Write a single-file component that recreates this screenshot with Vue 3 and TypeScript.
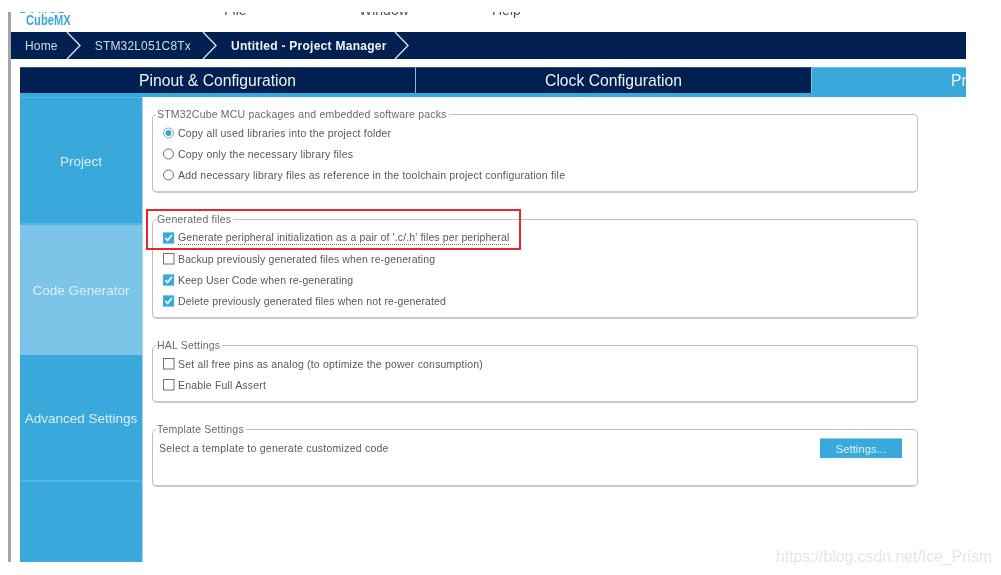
<script setup lang="ts">
interface Opt { label: string; on?: boolean; dotted?: boolean }
interface Group { title: string; kind: 'radio' | 'check'; opts: Opt[]; cls: string }

const crumbs = [
  { label: 'Home', cls: 'c-home' },
  { label: 'STM32L051C8Tx', cls: 'c-mcu' },
  { label: 'Untitled - Project Manager', cls: 'c-cur' },
]
const side = [
  { label: 'Project', cls: 's-project' },
  { label: 'Code Generator', cls: 's-code' },
  { label: 'Advanced Settings', cls: 's-adv' },
]
const groups: Group[] = [
  {
    title: 'STM32Cube MCU packages and embedded software packs', kind: 'radio', cls: 'g1',
    opts: [
      { label: 'Copy all used libraries into the project folder', on: true },
      { label: 'Copy only the necessary library files' },
      { label: 'Add necessary library files as reference in the toolchain project configuration file' },
    ],
  },
  {
    title: 'Generated files', kind: 'check', cls: 'g2',
    opts: [
      { label: "Generate peripheral initialization as a pair of '.c/.h' files per peripheral", on: true, dotted: true },
      { label: 'Backup previously generated files when re-generating' },
      { label: 'Keep User Code when re-generating', on: true },
      { label: 'Delete previously generated files when not re-generated', on: true },
    ],
  },
  {
    title: 'HAL Settings', kind: 'check', cls: 'g3',
    opts: [
      { label: 'Set all free pins as analog (to optimize the power consumption)' },
      { label: 'Enable Full Assert' },
    ],
  },
]
</script>

<template>
  <div class="page">
    <div class="frame">
      <header class="top">
        <div class="logo"><span class="stm">STM32</span><span class="cube">CubeMX</span></div>
        <nav class="menu"><span class="m-file">File</span><span class="m-win">Window</span><span class="m-help">Help</span></nav>
      </header>
      <div class="crumbs">
        <div v-for="c in crumbs" :key="c.label" class="crumb" :class="c.cls">
          <span>{{ c.label }}</span>
          <svg class="chev" width="16" height="27" viewBox="0 0 16 27"><path d="M1 0 L14 13.5 L1 27" fill="none" stroke="#dfe6ee" stroke-width="1.3"/></svg>
        </div>
      </div>
      <div class="work">
        <div class="tabs">
          <div class="tab">Pinout &amp; Configuration</div>
          <div class="tab">Clock Configuration</div>
          <div class="tab active"><span>Project Manager</span></div>
        </div>
        <div class="body">
          <aside class="side">
            <div v-for="s in side" :key="s.label" class="side-item" :class="s.cls">{{ s.label }}</div>
            <div class="side-rest"></div>
          </aside>
          <main class="content">
            <fieldset v-for="g in groups" :key="g.title" class="group" :class="g.cls">
              <legend>{{ g.title }}</legend>
              <div v-for="o in g.opts" :key="o.label" class="opt">
                <svg v-if="g.kind === 'radio'" class="ctl" width="12" height="12" viewBox="0 0 12 12">
                  <circle cx="5.5" cy="6" r="5" fill="#fff" :stroke="o.on ? '#8fa3b0' : '#6d7275'" stroke-width="1"/>
                  <circle v-if="o.on" cx="5.5" cy="6" r="3" fill="#39a9dc"/>
                </svg>
                <svg v-else class="ctl" width="12" height="12" viewBox="0 0 12 12">
                  <template v-if="o.on">
                    <rect x="0" y="0.5" width="11" height="11" fill="#39a9dc" stroke="#6dbfe4" stroke-width="0.5"/>
                    <path d="M2.4 6 L4.6 8.4 L8.8 3" fill="none" stroke="#fff" stroke-width="1.7"/>
                  </template>
                  <rect v-else x="0.5" y="0.5" width="10.5" height="10.5" fill="#fff" stroke="#6d7275"/>
                </svg>
                <span :class="{ dotted: o.dotted }">{{ o.label }}</span>
              </div>
            </fieldset>
            <fieldset class="group g4">
              <legend>Template Settings</legend>
              <div class="tpl">
                <span>Select a template to generate customized code</span>
                <button class="btn" type="button">Settings...</button>
              </div>
            </fieldset>
          </main>
        </div>
      </div>
    </div>
    <div class="red"></div>
    <div class="mark">https://blog.csdn.net/Ice_Prism</div>
  </div>
</template>

<style>
html, body { margin: 0; background: #fff; }
</style>

<style scoped>
.page {
  position: relative;
  width: 1001px;
  height: 575px;
  overflow: hidden;
  background: #fff;
  font-family: "Liberation Sans", Arial, sans-serif;
  padding: 12px 0 0 8px;
  box-sizing: border-box;
  filter: blur(0.3px);
}
.frame {
  width: 958px;
  height: 550px;
  box-sizing: border-box;
  border-left: 3px solid #a3a5a6;
  overflow: hidden;
  display: flex;
  flex-direction: column;
}
.top {
  height: 20px;
  flex: none;
  display: flex;
  overflow: hidden;
}
.logo {
  width: 213px;
  flex: none;
  padding-left: 15px;
  margin-top: -6px;
  display: flex;
  flex-direction: column;
  font-weight: 700;
  color: #3aa7dc;
  box-sizing: border-box;
}
.stm { font-size: 11px; line-height: 7px; margin-left: -7px; letter-spacing: 2.5px; }
.cube { font-size: 14px; line-height: 14px; transform: scaleX(0.8); transform-origin: left; }
.menu {
  display: flex;
  margin-top: -9px;
  font-size: 14px;
  line-height: 14px;
  color: #45586a;
}
.m-file { width: 135px; }
.m-win { width: 133px; }
.crumbs {
  height: 27px;
  flex: none;
  background: #002052;
  display: flex;
  align-items: stretch;
  color: #d5dbe4;
  font-size: 12px;
  letter-spacing: 0.17px;
}
.crumb { display: flex; align-items: center; }
.crumb span { display: block; }
.chev { flex: none; }
.c-home { padding-left: 14px; }
.c-home .chev { margin-left: 8px; }
.c-mcu { padding-left: 13px; }
.c-mcu .chev { margin-left: 11px; }
.c-cur { padding-left: 13px; font-weight: 700; color: #f2f4f7; letter-spacing: 0.27px; }
.c-cur .chev { margin-left: 7px; }
.work {
  flex: 1;
  margin: 8px 0 0 9px;
  display: flex;
  flex-direction: column;
  min-height: 0;
}
.tabs {
  height: 30px;
  flex: none;
  box-sizing: border-box;
  background: #39a9dc;
  border-bottom: 4px solid #39a9dc;
  display: flex;
}
.tab {
  width: 396px;
  flex: none;
  box-sizing: border-box;
  background: #002052;
  border-top: 1px solid #3a5478;
  border-right: 1px solid #9fb2c8;
  color: #f0f3f6;
  font-size: 15.7px;
  display: flex;
  align-items: center;
  justify-content: center;
}
.tab.active {
  width: 155px;
  background: #39a9dc;
  border-top-color: #6cc0e6;
  border-right: 0;
  justify-content: flex-start;
  white-space: nowrap;
  overflow: hidden;
  padding-left: 139px;
}
.body { flex: 1; display: flex; min-height: 0; }
.side {
  width: 122px;
  flex: none;
  display: flex;
  flex-direction: column;
  background: #39a9dc;
  color: #d9eef8;
  font-size: 13.5px;
  border-right: 1px solid #a8d9f0;
}
.side-item {
  display: flex;
  align-items: center;
  justify-content: center;
  white-space: nowrap;
  box-sizing: border-box;
}
.s-project { height: 128px; padding-top: 2px; border-top: 1px solid #55b5e1; border-bottom: 2px solid #55b5e1; }
.s-code { height: 130px; background: #7cc5e9; }
.s-adv { height: 127px; padding-top: 1px; border-bottom: 2px solid #55b5e1; }
.side-rest { flex: 1; }
.content {
  flex: 1;
  padding: 10px 0 0 9px;
  display: flex;
  flex-direction: column;
  min-width: 0;
}
.group {
  width: 766px;
  margin: 0;
  padding: 0 0 0 10px;
  box-sizing: border-box;
  border: 1px solid #bcc1c4;
  border-bottom: 2px solid #c8cccf;
  border-radius: 5px;
  color: #55595c;
  font-size: 10.5px;
  letter-spacing: 0.19px;
}
.group legend {
  margin-left: -7px;
  padding: 0 2px 0 1px;
  line-height: 14px;
  height: 14px;
  color: #666a6d;
  font-size: 10.5px;
  letter-spacing: 0.2px;
}
.g1 { height: 86px; }
.g2 { height: 107px; margin-top: 19px; letter-spacing: 0.13px; }
.g3 { height: 65px; margin-top: 19px; }
.g4 { height: 65px; margin-top: 19px; letter-spacing: 0.24px; }
.opt {
  height: 21px;
  position: relative;
  top: 1px;
  display: flex;
  align-items: center;
  gap: 3px;
  white-space: nowrap;
}
.ctl { flex: none; }
.dotted { border-bottom: 1px dotted #6d7275; line-height: 14px; }
.tpl {
  display: flex;
  justify-content: space-between;
  align-items: flex-start;
  margin-left: -4px;
  line-height: 14px;
  padding-top: 2px;
}
.tpl span { margin-top: 3px; }
.btn {
  width: 82px;
  height: 20px;
  margin-right: 15px;
  border: 0;
  border-top: 1px solid #8fd0ee;
  background: #39a9dc;
  color: #dff1fa;
  font: 11px "Liberation Sans", Arial, sans-serif;
  letter-spacing: 0.15px;
  padding: 0;
}
.red {
  position: absolute;
  left: 146px;
  top: 209px;
  width: 375px;
  height: 41px;
  box-sizing: border-box;
  border: 2px solid #e8262e;
}
.mark {
  position: absolute;
  left: 776px;
  top: 548px;
  font-size: 15.8px;
  line-height: 18px;
  color: #e6e6e6;
  white-space: nowrap;
}
</style>
